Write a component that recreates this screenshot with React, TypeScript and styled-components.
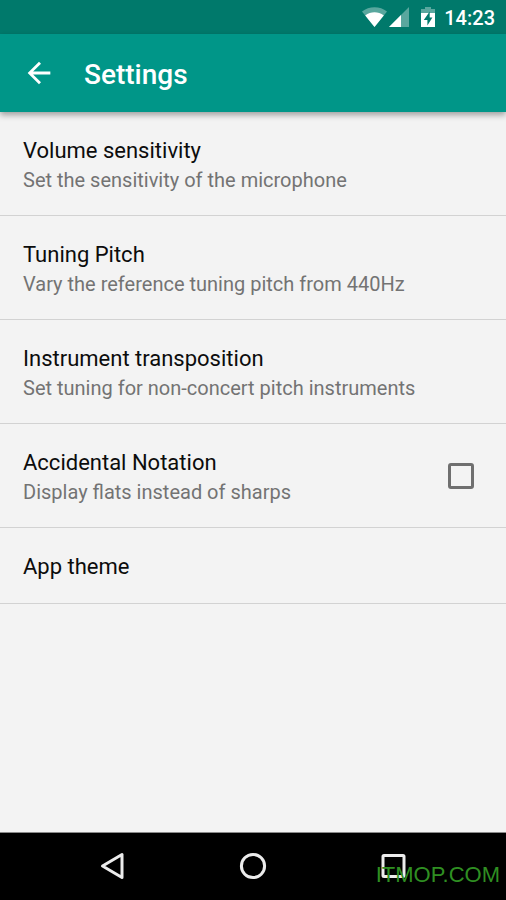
import React from 'react';
import styled, { createGlobalStyle } from 'styled-components';

const GlobalStyle = createGlobalStyle`
  *, *::before, *::after { box-sizing: border-box; }
  body {
    margin: 0;
    background: #f3f3f3;
    font-family: Roboto, "Noto Sans", sans-serif;
  }
`;

const Screen = styled.div`
  display: flex;
  flex-direction: column;
  min-height: 100vh;
`;

const StatusBar = styled.div`
  display: flex;
  align-items: center;
  justify-content: flex-end;
  height: 34px;
  padding-right: 11px;
  background: #00796b;
  color: #fff;
`;

const StatusIcon = styled.svg<{ $gap: number }>`
  display: block;
  margin-right: ${(p) => p.$gap}px;
`;

const Clock = styled.time`
  font-size: 20px;
  line-height: 24px;
  font-weight: 500;
  padding-top: 2px;
`;

const Toolbar = styled.header`
  position: relative;
  display: flex;
  align-items: center;
  gap: 28px;
  height: 78px;
  padding-left: 22px;
  background: #009688;
  color: #fff;
  box-shadow: 0 3px 6px rgba(0, 0, 0, 0.35);
`;

const IconButton = styled.button`
  display: flex;
  padding: 0;
  border: 0;
  background: none;
  color: inherit;
  cursor: pointer;
`;

const PageTitle = styled.h1`
  margin: 0;
  padding-top: 3px;
  font-size: 28px;
  line-height: 36px;
  font-weight: 500;
`;

const SettingsList = styled.ul`
  flex: 1;
  margin: 0;
  padding: 0;
  list-style: none;
`;

const SettingItem = styled.li`
  border-bottom: 1px solid #d2d2d2;
`;

const rowLayout = `
  display: flex;
  align-items: center;
  justify-content: space-between;
  width: 100%;
  padding: 20px 32px 20px 23px;
  cursor: pointer;
`;

const SettingButton = styled.button`
  ${rowLayout}
  border: 0;
  background: none;
  font: inherit;
  text-align: left;
`;

const SettingLabel = styled.label`
  ${rowLayout}
`;

const TextBlock = styled.span`
  display: flex;
  flex-direction: column;
  padding-top: 3px;
`;

const SettingTitle = styled.span`
  font-size: 22px;
  line-height: 32px;
  color: #0c0c0c;
`;

const SettingSummary = styled.span`
  padding-bottom: 2px;
  font-size: 20px;
  line-height: 26px;
  color: #737373;
`;

const Checkbox = styled.input`
  appearance: none;
  flex: none;
  width: 26px;
  height: 26px;
  margin: 0;
  border: 3px solid #6f6f6f;
  border-radius: 3px;
  cursor: pointer;
  &:checked { background: #009688; border-color: #009688; }
`;

const NavBar = styled.nav`
  position: relative;
  display: flex;
  align-items: center;
  justify-content: center;
  gap: 112px;
  height: 68px;
  padding-bottom: 1px;
  border-top: 1px solid #8a8a8a;
  background: #000;
  color: #ececec;
`;

const Watermark = styled.span`
  position: absolute;
  right: 6px;
  bottom: 12px;
  font-family: "Liberation Sans", Arial, sans-serif;
  font-size: 22px;
  line-height: 26px;
  color: #2f8f22;
`;

type Setting = { title: string; summary?: string; checkbox?: boolean };

const settings: Setting[] = [
  { title: 'Volume sensitivity', summary: 'Set the sensitivity of the microphone' },
  { title: 'Tuning Pitch', summary: 'Vary the reference tuning pitch from 440Hz' },
  { title: 'Instrument transposition', summary: 'Set tuning for non-concert pitch instruments' },
  { title: 'Accidental Notation', summary: 'Display flats instead of sharps', checkbox: true },
  { title: 'App theme' },
];

function SettingText({ title, summary }: Setting) {
  return (
    <TextBlock>
      <SettingTitle>{title}</SettingTitle>
      {summary && <SettingSummary>{summary}</SettingSummary>}
    </TextBlock>
  );
}

export default function App() {
  return (
    <Screen>
      <GlobalStyle />
      <StatusBar>
        <StatusIcon $gap={2} width="25" height="20" viewBox="0 0 25 20" aria-hidden="true">
          <path d="M0 4.6C7 -1.2 18 -1.2 25 4.6L12.5 20Z" fill="#fff" fillOpacity="0.35" />
          <path d="M3.2 8.4C8.8 4.1 16.2 4.1 21.8 8.4L12.5 20Z" fill="#fff" />
        </StatusIcon>
        <StatusIcon $gap={12} width="20" height="20" viewBox="0 0 20 20" aria-hidden="true">
          <path d="M0 20L20 0V20Z" fill="#fff" fillOpacity="0.35" />
          <path d="M0 20L12 8V20Z" fill="#fff" />
        </StatusIcon>
        <StatusIcon $gap={9} width="14" height="20" viewBox="0 0 14 20" aria-hidden="true">
          <path d="M0 2H4V0H10V2H14V6H0Z" fill="#fff" fillOpacity="0.35" />
          <path d="M0 6H14V20H0Z" fill="#fff" />
          <path d="M8.7 4.5L2.8 13H6.4V18.5L11.4 10.5H8.7Z" fill="#00796b" />
        </StatusIcon>
        <Clock>14:23</Clock>
      </StatusBar>
      <Toolbar>
        <IconButton type="button" aria-label="Back">
          <svg width="34" height="34" viewBox="0 0 24 24" aria-hidden="true">
            <path d="M20 11H7.83l5.59-5.59L12 4l-8 8 8 8 1.41-1.41L7.83 13H20v-2z" fill="currentColor" />
          </svg>
        </IconButton>
        <PageTitle>Settings</PageTitle>
      </Toolbar>
      <SettingsList>
        {settings.map((s) => (
          <SettingItem key={s.title}>
            {s.checkbox ? (
              <SettingLabel>
                <SettingText {...s} />
                <Checkbox type="checkbox" />
              </SettingLabel>
            ) : (
              <SettingButton type="button">
                <SettingText {...s} />
              </SettingButton>
            )}
          </SettingItem>
        ))}
      </SettingsList>
      <NavBar>
        <IconButton type="button" aria-label="Back">
          <svg width="28" height="28" viewBox="0 0 28 28" aria-hidden="true">
            <path d="M23 2.5V25.5L3.5 14Z" fill="none" stroke="currentColor" strokeWidth="3" strokeLinejoin="round" />
          </svg>
        </IconButton>
        <IconButton type="button" aria-label="Home">
          <svg width="28" height="28" viewBox="0 0 28 28" aria-hidden="true">
            <circle cx="14" cy="14" r="11.6" fill="none" stroke="currentColor" strokeWidth="3" />
          </svg>
        </IconButton>
        <IconButton type="button" aria-label="Recent apps">
          <svg width="28" height="28" viewBox="0 0 28 28" aria-hidden="true">
            <rect x="4" y="3.5" width="21" height="21" rx="1" fill="none" stroke="currentColor" strokeWidth="3" />
          </svg>
        </IconButton>
        <Watermark>ITMOP.COM</Watermark>
      </NavBar>
    </Screen>
  );
}
